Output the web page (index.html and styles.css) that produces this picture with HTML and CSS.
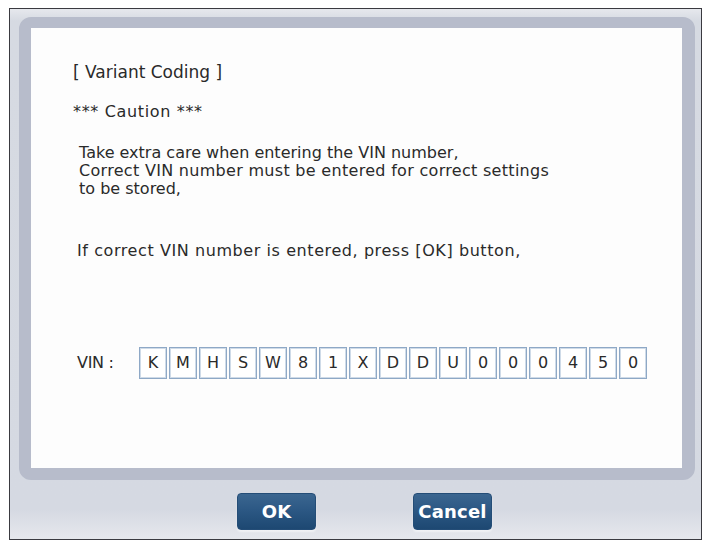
FILE: index.html
```html
<!DOCTYPE html>
<html>
<head>
<meta charset="utf-8">
<link rel="stylesheet" href="styles.css">
</head>
<body>
<div class="dialog">
  <div class="frame">
    <div class="content">
      <p class="title">[ Variant Coding ]</p>
      <p class="caution">*** Caution ***</p>
      <p class="msg"><span class="l1">Take extra care when entering the VIN number,</span><br><span class="l2">Correct VIN number must be entered for correct settings</span><br><span class="l3">to be stored,</span></p>
      <p class="confirm">If correct VIN number is entered, press [OK] button,</p>
      <div class="vin-row">
        <span class="vin-label">VIN :</span>
        <div class="vin-boxes">
          <span class="box">K</span><span class="box">M</span><span class="box">H</span><span class="box">S</span><span class="box">W</span><span class="box">8</span><span class="box">1</span><span class="box">X</span><span class="box">D</span><span class="box">D</span><span class="box">U</span><span class="box">0</span><span class="box">0</span><span class="box">0</span><span class="box">4</span><span class="box">5</span><span class="box">0</span>
        </div>
      </div>
    </div>
  </div>
  <div class="buttons">
    <button class="btn btn-ok">OK</button>
    <button class="btn btn-cancel">Cancel</button>
  </div>
</div>
</body>
</html>
```

FILE: styles.css
```css
html, body {
  margin: 0;
  padding: 0;
  background: #ffffff;
}

.dialog {
  box-sizing: border-box;
  margin: 8px 0 0 9px;
  width: 693px;
  height: 532px;
  border: 1px solid #3a3a40;
  background: linear-gradient(to bottom, #e6e8ed 0px, #d6dae2 12px, #d5d9e2 500px, #e6e8ed 530px);
  padding: 8px 5px 0 9px;
  display: flex;
  flex-direction: column;
}

.frame {
  box-sizing: border-box;
  width: 676px;
  height: 463px;
  border-style: solid;
  border-color: #b7bccb;
  border-width: 11px 13px 12px 12px;
  border-radius: 12px;
  background: #fdfdfd;
}

.content {
  padding: 35px 0 0 42px;
  font-family: "DejaVu Sans", "Liberation Sans", sans-serif;
  font-size: 16px;
  line-height: 18px;
  color: #2a2a2a;
}

.content p {
  margin: 0;
}

.title {
  height: 40px;
  font-size: 17px;
}

.caution {
  height: 41px;
  letter-spacing: 0.65px;
}

.msg {
  padding-left: 6px;
  height: 98px;
}

.l2 {
  letter-spacing: 0.3px;
}

.confirm {
  padding-left: 4px;
  height: 105px;
  letter-spacing: 0.58px;
}

.vin-row {
  display: flex;
  align-items: center;
  padding-left: 4px;
}

.vin-label {
  width: 62px;
  letter-spacing: -0.3px;
}

.vin-boxes {
  display: flex;
  gap: 2px;
}

.box {
  box-sizing: border-box;
  width: 28px;
  height: 32px;
  border: 1px solid #8ea8c6;
  box-shadow: inset 0 0 0 1px #cfdbe8;
  display: flex;
  align-items: center;
  justify-content: center;
  background: #ffffff;
}

.buttons {
  display: flex;
  padding: 13px 0 0 218px;
  gap: 97px;
}

.btn {
  box-sizing: border-box;
  width: 79px;
  height: 37px;
  border: 1px solid #244d77;
  border-radius: 4px;
  background: linear-gradient(to bottom, #3b6690 0%, #2c5884 45%, #1d4872 100%);
  color: #ffffff;
  font-family: "DejaVu Sans", sans-serif;
  font-weight: bold;
  font-size: 18px;
  letter-spacing: 0.2px;
  padding: 0;
  box-shadow: 0 2px 2px rgba(255, 255, 255, 0.5);
}
```
